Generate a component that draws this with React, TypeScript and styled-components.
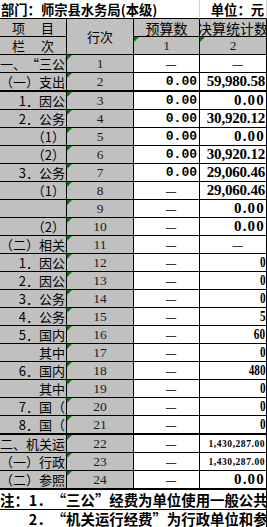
import React from 'react';
import styled, { createGlobalStyle } from 'styled-components';

const GlobalStyle = createGlobalStyle`
  html, body { margin: 0; padding: 0; background: #ffffff; }
  body { width: 267px; height: 527px; overflow: hidden; }
`;

const CJK = `"Noto Sans CJK SC", "Noto Sans", sans-serif`;
const GREY = '#c0c0c0';

const Sheet = styled.div`
  display: grid;
  grid-template-columns: 67px 67px 66px 67px;
  width: 267px;
  font-family: ${CJK};
  color: #000;
`;

const TitleCell = styled.div<{ $span: number; $right?: boolean }>`
  grid-column: span ${(p) => p.$span};
  box-sizing: border-box;
  height: 19px;
  border-bottom: 1px solid #000;
  border-right: 1px solid #d4d4d4;
  display: flex;
  align-items: center;
  justify-content: ${(p) => (p.$right ? 'flex-end' : 'flex-start')};
  padding: ${(p) => (p.$right ? '0 2px 0 0' : '0 0 0 1px')};
  font-size: 13.3px;
  font-weight: 700;
  white-space: nowrap;
  overflow: visible;
`;

const Cell = styled.div<{ $white?: boolean; $thick?: boolean; $h?: number; $rows?: number }>`
  position: relative;
  box-sizing: border-box;
  height: ${(p) => p.$h ?? (p.$thick ? 19 : 18)}px;
  grid-row: span ${(p) => p.$rows ?? 1};
  background: ${(p) => (p.$white ? '#ffffff' : GREY)};
  border-right: 1px solid #000;
  border-bottom: ${(p) => (p.$thick ? 2 : 1)}px solid #000;
  overflow: hidden;
  display: flex;
  align-items: center;
  white-space: nowrap;
`;

const HeadText = styled(Cell)<{ $size?: number }>`
  justify-content: center;
  font-size: ${(p) => p.$size ?? 13}px;
`;

const SpreadText = styled(Cell)`
  justify-content: space-between;
  padding: 0 12px 0 12px;
  font-size: 13px;
`;

const LabelCell = styled(Cell)<{ $right?: boolean }>`
  justify-content: ${(p) => (p.$right ? 'flex-end' : 'flex-start')};
  padding: ${(p) => (p.$right ? '0 1px 0 0' : '0 0 0 0')};
  font-size: 13px;
`;

const SerialCell = styled(Cell)`
  justify-content: center;
  font-family: "Liberation Serif", serif;
  font-size: 13.5px;
  color: #1a1a1a;
`;

const BudgetCell = styled(Cell)<{ $dash?: boolean }>`
  justify-content: ${(p) => (p.$dash ? 'center' : 'flex-end')};
  padding: ${(p) => (p.$dash ? '0 0 0 9px' : '0 2px 0 0')};
  font-family: ${(p) => (p.$dash ? CJK : '"Liberation Mono", monospace')};
  font-weight: ${(p) => (p.$dash ? 400 : 700)};
  font-size: 13px;
`;

const FinalCell = styled(Cell)<{ $dash?: boolean }>`
  justify-content: ${(p) => (p.$dash ? 'center' : 'flex-end')};
  padding: ${(p) => (p.$dash ? '0 0 0 9px' : '0 1px 0 0')};
  font-family: ${(p) => (p.$dash ? CJK : '"Liberation Serif", serif')};
  font-weight: ${(p) => (p.$dash ? 400 : 700)};
  font-size: 13px;
`;

const Amount = styled.span<{ $size: number; $ls: number; $sx: number }>`
  display: inline-block;
  font-size: ${(p) => p.$size}px;
  letter-spacing: ${(p) => p.$ls}px;
  transform: scaleX(${(p) => p.$sx});
  transform-origin: right center;
`;

const Quote = styled.span`
  font-feature-settings: "fwid" 1;
  font-variant-east-asian: full-width;
`;

const Flag = styled.span`
  position: absolute;
  top: 0;
  left: 0;
  width: 0;
  height: 0;
  border-top: 5px solid #008000;
  border-right: 5px solid transparent;
`;

const Note = styled.div<{ $indent: number; $h: number }>`
  grid-column: 1 / -1;
  box-sizing: border-box;
  height: ${(p) => p.$h}px;
  border-right: 1px solid #000;
  border-bottom: 1px solid #000;
  padding-left: ${(p) => p.$indent}px;
  display: flex;
  align-items: center;
  font-size: 14.4px;
  font-weight: 700;
  white-space: nowrap;
  overflow: hidden;
`;

function withQuotes(text: string) {
  return text.split(/([“”])/).map((part, i) =>
    part === '“' || part === '”' ? <Quote key={i}>{part}</Quote> : <React.Fragment key={i}>{part}</React.Fragment>
  );
}

type Row = {
  label: string;
  right?: boolean;
  budget: string;
  final: string;
  thick?: boolean;
};

const rows: Row[] = [
  { label: '一、“三公”经费支出', budget: '—', final: '—' },
  { label: '（一）支出合计', budget: '0.00', final: '59,980.58', thick: true },
  { label: '1．因公', right: true, budget: '0.00', final: '0.00' },
  { label: '2．公务', right: true, budget: '0.00', final: '30,920.12' },
  { label: '（1）', right: true, budget: '0.00', final: '0.00' },
  { label: '（2）', right: true, budget: '0.00', final: '30,920.12' },
  { label: '3．公务', right: true, budget: '0.00', final: '29,060.46' },
  { label: '（1）', right: true, budget: '—', final: '29,060.46' },
  { label: '', right: true, budget: '—', final: '0.00' },
  { label: '（2）', right: true, budget: '—', final: '0.00' },
  { label: '（二）相关统计数', budget: '—', final: '—' },
  { label: '1．因公', right: true, budget: '—', final: '0' },
  { label: '2．因公', right: true, budget: '—', final: '0' },
  { label: '3．公务', right: true, budget: '—', final: '0' },
  { label: '4．公务', right: true, budget: '—', final: '5' },
  { label: '5．国内', right: true, budget: '—', final: '60' },
  { label: '其中', right: true, budget: '—', final: '0' },
  { label: '6．国内', right: true, budget: '—', final: '480' },
  { label: '其中', right: true, budget: '—', final: '0' },
  { label: '7．国（', right: true, budget: '—', final: '0' },
  { label: '8．国（', right: true, budget: '—', final: '0', thick: true },
  { label: '二、机关运行经费', budget: '—', final: '1,430,287.00' },
  { label: '（一）行政单位', budget: '—', final: '1,430,287.00' },
  { label: '（二）参照公务员法管理事业单位', budget: '—', final: '0.00', thick: true },
];

function amountStyle(v: string) {
  if (v.length > 10) return { size: 9.5, ls: 0.55, sx: 1 };
  if (v === '0.00') return { size: 15, ls: 1.2, sx: 1 };
  if (v.includes('.')) return { size: 15, ls: -0.2, sx: 1 };
  return { size: 15, ls: 0, sx: 0.75 };
}

export default function App() {
  return (
    <>
      <GlobalStyle />
      <Sheet>
        <TitleCell $span={3}>部门：师宗县水务局(本级)</TitleCell>
        <TitleCell $span={1} $right>
          单位：元
        </TitleCell>

        <SpreadText>
          <span>项</span>
          <span>目</span>
        </SpreadText>
        <HeadText $rows={2} $h={36}>
          行次
        </HeadText>
        <HeadText $size={14}>预算数</HeadText>
        <HeadText $size={14}>决算统计数</HeadText>

        <SpreadText>
          <span>栏</span>
          <span>次</span>
        </SpreadText>
        <SerialCell>
          <Flag />1
        </SerialCell>
        <SerialCell>
          <Flag />2
        </SerialCell>

        {rows.map((r, i) => {
          const a = amountStyle(r.final);
          return (
            <React.Fragment key={i}>
              <LabelCell $right={r.right} $thick={r.thick}>
                {withQuotes(r.label)}
              </LabelCell>
              <SerialCell $thick={r.thick}>
                <Flag />
                {i + 1}
              </SerialCell>
              <BudgetCell $white $thick={r.thick} $dash={r.budget === '—'}>
                {r.budget}
              </BudgetCell>
              <FinalCell $white $thick={r.thick} $dash={r.final === '—'}>
                {r.final === '—' ? (
                  r.final
                ) : (
                  <Amount $size={a.size} $ls={a.ls} $sx={a.sx}>
                    {r.final}
                  </Amount>
                )}
              </FinalCell>
            </React.Fragment>
          );
        })}

        <Note $indent={0} $h={20}>
          {withQuotes('注：1．“三公”经费为单位使用一般公共预算财政拨款安排的因公出国（境）费、公务用车购置及运行维护费和公务接待费支出。')}
        </Note>
        <Note $indent={28.8} $h={18}>
          {withQuotes('2．“机关运行经费”为行政单位和参照公务员法管理的事业单位使用一般公共预算财政拨款安排的基本支出中的日常公用经费支出。')}
        </Note>
      </Sheet>
    </>
  );
}
